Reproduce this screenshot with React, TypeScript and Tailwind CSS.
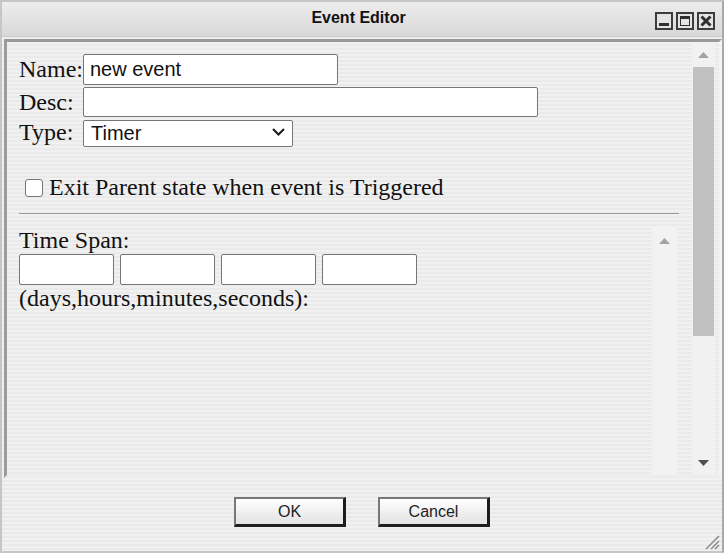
import React from 'react'

const stripes =
    "bg-[image:repeating-linear-gradient(180deg,#f1f1f1_0px,#f1f1f1_2px,#eaeaea_2px,#eaeaea_4px)]"

const TitleButton = ({ kind }: { kind: 'min' | 'max' | 'close' }) => {
    return (
        <div className='w-[18px] h-[18px] border-2 border-[#3c3c3c] bg-[#e4e4e4] flex items-center justify-center'>
            {kind === 'min' && <div className='w-[10px] h-[3px] bg-[#2f2f2f] mt-[7px]' />}
            {kind === 'max' && <div className='w-[10px] h-[10px] border border-t-[3px] border-[#2f2f2f]' />}
            {kind === 'close' && (
                <svg width='12' height='12' viewBox='0 0 12 12'>
                    <path d='M1.5 1.5 L10.5 10.5 M10.5 1.5 L1.5 10.5' stroke='#2f2f2f' strokeWidth='3' />
                </svg>
            )}
        </div>
    )
}

const Arrow = ({ dir, color }: { dir: 'up' | 'down'; color: string }) => (
    <svg width='11' height='6' viewBox='0 0 11 6'>
        <path d={dir === 'up' ? 'M5.5 0 L11 6 L0 6 Z' : 'M0 0 L11 0 L5.5 6 Z'} fill={color} />
    </svg>
)

const DialogButton = ({ label }: { label: string }) => (
    <button className='w-[112px] h-[30px] border-t-2 border-l-2 border-b-[3px] border-r-[3px] border-t-[#777] border-l-[#777] border-b-[#1e1e1e] border-r-[#1e1e1e] bg-linear-to-b from-[#ffffff] to-[#e2e2e2] text-[16px] text-[#222] font-["Liberation_Sans",Arial,sans-serif]'>
        {label}
    </button>
)

const App = () => {
    return (
        <div className={`relative w-[724px] h-[553px] overflow-hidden border-2 border-[#c6c6c6] border-r-[#a9a9a9] ${stripes} flex flex-col`}>
            {/* title bar */}
            <div className='h-[35px] shrink-0 flex items-center bg-linear-to-b from-[#ededed] to-[#d8d8d8] border-b border-[#cbcbcb]'>
                <div className='flex-1' />
                <div className='text-[16px] font-bold text-[#111] font-["Liberation_Sans",Arial,sans-serif] -mt-[3px]'>Event Editor</div>
                <div className='flex-1 flex justify-end gap-[3px] pr-[7px] mt-[3px]'>
                    <TitleButton kind='min' />
                    <TitleButton kind='max' />
                    <TitleButton kind='close' />
                </div>
            </div>

            {/* main panel */}
            <div className='mt-[2px] ml-[2px] h-[439px] shrink-0 flex border-t-[3px] border-l-[3px] border-r-[3px] border-b-[3px] border-t-[#999] border-l-[#9c9c9c] border-r-[#f3f3f3] border-b-[#ececec]'>
                <div className='flex-1 min-w-0 flex flex-col pl-[12px] pr-[13px] pt-[12px] font-["Liberation_Serif","Times_New_Roman",serif] text-[24px] leading-[27px] text-[#111]'>
                    <div className='flex items-center h-[31px]'>
                        <span className='w-[64px] shrink-0 whitespace-nowrap'>Name:</span>
                        <input
                            defaultValue='new event'
                            className='w-[255px] h-[31px] border border-[#767676] rounded-[2px] bg-white px-[6px] text-[20px] text-[#111] font-["Liberation_Sans",Arial,sans-serif] outline-none'
                        />
                    </div>
                    <div className='flex items-center h-[30px] mt-[2px]'>
                        <span className='w-[64px] shrink-0 whitespace-nowrap'>Desc:</span>
                        <input className='w-[455px] h-[30px] border border-[#767676] rounded-[2px] bg-white px-[6px] text-[20px] font-["Liberation_Sans",Arial,sans-serif] outline-none' />
                    </div>
                    <div className='flex items-center h-[27px] mt-[2px]'>
                        <span className='w-[64px] shrink-0 whitespace-nowrap'>Type:</span>
                        <div className='relative'>
                            <select className='appearance-none w-[210px] h-[27px] border border-[#767676] rounded-[2px] bg-white pl-[7px] text-[20px] leading-[25px] text-[#111] font-["Liberation_Sans",Arial,sans-serif] outline-none'>
                                <option>Timer</option>
                                <option>Message</option>
                            </select>
                            <svg className='absolute right-[8px] top-[9px] pointer-events-none' width='13' height='8' viewBox='0 0 13 8'>
                                <path d='M1 1 L6.5 6.5 L12 1' fill='none' stroke='#1a1a1a' strokeWidth='2' />
                            </svg>
                        </div>
                    </div>

                    <label className='flex items-center h-[27px] mt-[28px] pl-[6px] gap-[6px] whitespace-nowrap'>
                        <input type='checkbox' className='appearance-none w-[18px] h-[18px] border border-[#767676] rounded-[3px] bg-white shrink-0' />
                        <span>Exit Parent state when event is Triggered</span>
                    </label>

                    <div className='h-px bg-[#9a9a9a] mt-[12px] shrink-0' />

                    <div className='flex-1 min-h-0 flex mt-[13px] overflow-hidden'>
                        <div className='flex-1 min-w-0'>
                            <div>Time Span:</div>
                            <div className='flex gap-[6px]'>
                                <input className='w-[95px] h-[31px] border border-[#767676] rounded-[2px] bg-white outline-none' />
                                <input className='w-[95px] h-[31px] border border-[#767676] rounded-[2px] bg-white outline-none' />
                                <input className='w-[95px] h-[31px] border border-[#767676] rounded-[2px] bg-white outline-none' />
                                <input className='w-[95px] h-[31px] border border-[#767676] rounded-[2px] bg-white outline-none' />
                            </div>
                            <div>(days,hours,minutes,seconds):</div>
                        </div>
                        <div className='w-[25px] mr-[2px] bg-[#f2f2f2] flex justify-center pt-[11px]'>
                            <Arrow dir='up' color='#a3a3a3' />
                        </div>
                    </div>
                </div>

                {/* outer scrollbar */}
                <div className='w-[23px] mr-[4px] bg-[#f1f1f1] flex flex-col items-center'>
                    <div className='h-[25px] flex items-center justify-center pt-[1px]'>
                        <Arrow dir='up' color='#a3a3a3' />
                    </div>
                    <div className='w-[21px] h-[269px] bg-[#c1c1c1]' />
                    <div className='flex-1' />
                    <div className='h-[25px] flex items-start justify-center pt-[10px]'>
                        <Arrow dir='down' color='#505050' />
                    </div>
                </div>
            </div>

            <div className='flex justify-center gap-[32px] mt-[19px]'>
                <DialogButton label='OK' />
                <DialogButton label='Cancel' />
            </div>

            {/* resize grip */}
            <svg className='absolute right-[2px] bottom-[1px]' width='18' height='18' viewBox='0 0 18 18'>
                <path d='M17 4 L4 17 M17 9 L9 17 M17 13 L13 17' stroke='#8a8a8a' strokeWidth='1.5' />
            </svg>
        </div>
    )
}

export default App
